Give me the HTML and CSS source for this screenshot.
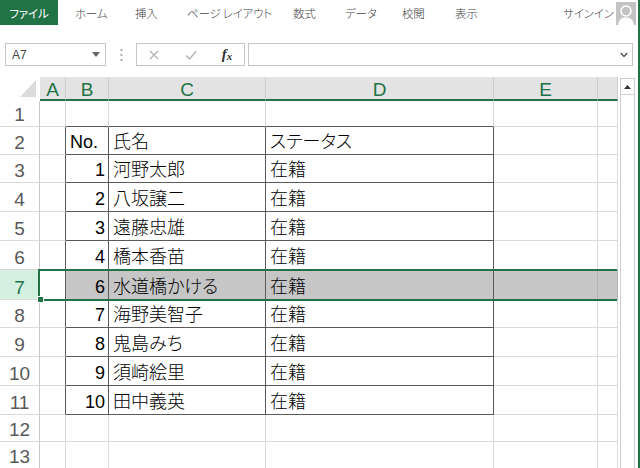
FILE: index.html
```html
<!DOCTYPE html>
<html lang="ja">
<head>
<meta charset="utf-8">
<title>Excel</title>
<link rel="stylesheet" href="styles.css">
</head>
<body>
<div class="app">
  <div class="tabs">
    <div class="tab"><div class="file">ファイル</div></div>
    <div class="tab">ホーム</div>
    <div class="tab">挿入</div>
    <div class="tab">ページ レイアウト</div>
    <div class="tab">数式</div>
    <div class="tab">データ</div>
    <div class="tab">校閲</div>
    <div class="tab">表示</div>
    <div class="tab">サインイン</div>
    <div class="avatar">
      <svg width="20" height="23" viewBox="0 0 20 23"><rect width="20" height="23" fill="#c3c3c3"/><circle cx="10" cy="9" r="5" fill="none" stroke="#fff" stroke-width="1.6"/><path d="M2 23 C3 17 6 15.5 10 15.5 C14 15.5 17 17 18 23 Z" fill="#fff"/></svg>
    </div>
  </div>

  <div class="fbar">
    <div class="namebox"><span>A7</span><svg width="8" height="5" viewBox="0 0 8 5"><path d="M0 0 H8 L4 5 Z" fill="#666"/></svg></div>
    <div class="colon"><svg width="3" height="12" viewBox="0 0 3 12"><rect x="0.5" y="0" width="2" height="2" fill="#aaa"/><rect x="0.5" y="5" width="2" height="2" fill="#aaa"/><rect x="0.5" y="10" width="2" height="2" fill="#aaa"/></svg></div>
    <div class="fbtns">
      <span class="fb"><svg width="10" height="10" viewBox="0 0 10 10"><path d="M1 1 L9 9 M9 1 L1 9" stroke="#b4b4b4" stroke-width="1.3"/></svg></span>
      <span class="fb"><svg width="12" height="10" viewBox="0 0 12 10"><path d="M1 5.5 L4.5 9 L11 1.5" fill="none" stroke="#b4b4b4" stroke-width="1.4"/></svg></span>
      <span class="fb fx"><i>f</i><span class="x">x</span></span>
    </div>
    <div class="finput"><svg width="8" height="6" viewBox="0 0 8 6"><path d="M0.8 1 L4 4.5 L7.2 1" fill="none" stroke="#555" stroke-width="1.4"/></svg></div>
  </div>

  <div class="main">
    <div class="sheet">
      <div class="corner"><svg width="40" height="24" viewBox="0 0 40 24"><path d="M20 20 H36 V3 Z" fill="#dcdcdc"/></svg></div>
      <div class="ch">A</div><div class="ch">B</div><div class="ch">C</div><div class="ch">D</div><div class="ch">E</div><div class="ch"></div>

      <div class="c rh">1</div><div class="c"></div><div class="c tb"></div><div class="c tb"></div><div class="c tb"></div><div class="c"></div><div class="c"></div>

      <div class="c rh">2</div><div class="c tr"></div><div class="c tb tr">No.</div><div class="c tb tr">氏名</div><div class="c tb tr">ステータス</div><div class="c"></div><div class="c"></div>

      <div class="c rh">3</div><div class="c tr"></div><div class="c tb tr num">1</div><div class="c tb tr">河野太郎</div><div class="c tb tr">在籍</div><div class="c"></div><div class="c"></div>

      <div class="c rh">4</div><div class="c tr"></div><div class="c tb tr num">2</div><div class="c tb tr">八坂譲二</div><div class="c tb tr">在籍</div><div class="c"></div><div class="c"></div>

      <div class="c rh">5</div><div class="c tr"></div><div class="c tb tr num">3</div><div class="c tb tr">遠藤忠雄</div><div class="c tb tr">在籍</div><div class="c"></div><div class="c"></div>

      <div class="c rh">6</div><div class="c tr"></div><div class="c tb tr num">4</div><div class="c tb tr">橋本香苗</div><div class="c tb tr">在籍</div><div class="c"></div><div class="c"></div>

      <div class="c rh on">7</div><div class="c tr"></div><div class="c tb tr num s">6</div><div class="c tb tr s">水道橋かける</div><div class="c tb tr s">在籍</div><div class="c s"></div><div class="c s"></div>

      <div class="c rh">8</div><div class="c tr"></div><div class="c tb tr num">7</div><div class="c tb tr">海野美智子</div><div class="c tb tr">在籍</div><div class="c"></div><div class="c"></div>

      <div class="c rh">9</div><div class="c tr"></div><div class="c tb tr num">8</div><div class="c tb tr">鬼島みち</div><div class="c tb tr">在籍</div><div class="c"></div><div class="c"></div>

      <div class="c rh">10</div><div class="c tr"></div><div class="c tb tr num">9</div><div class="c tb tr">須崎絵里</div><div class="c tb tr">在籍</div><div class="c"></div><div class="c"></div>

      <div class="c rh">11</div><div class="c tr"></div><div class="c tb tr num">10</div><div class="c tb tr">田中義英</div><div class="c tb tr">在籍</div><div class="c"></div><div class="c"></div>

      <div class="c rh">12</div><div class="c"></div><div class="c"></div><div class="c"></div><div class="c"></div><div class="c"></div><div class="c"></div>

      <div class="c rh">13</div><div class="c"></div><div class="c"></div><div class="c"></div><div class="c"></div><div class="c"></div><div class="c"></div>

      <div class="sel"></div>
      <div class="handle"></div>
    </div>
    <div class="vscroll">
      <div class="up"><svg width="7" height="4" viewBox="0 0 7 4"><path d="M0 4 H7 L3.5 0 Z" fill="#333"/></svg></div>
    </div>
  </div>
</div>
</body>
</html>
```

FILE: styles.css
```css
* { box-sizing: border-box; }
html, body { margin: 0; padding: 0; }
body {
  width: 640px;
  height: 468px;
  overflow: hidden;
  background: #fff;
  font-family: "Liberation Sans", "Noto Sans CJK JP", sans-serif;
}
.app {
  width: 640px;
  height: 468px;
  border-right: 2px solid #217346;
  overflow: hidden;
}

/* ribbon tabs */
.tabs {
  display: grid;
  grid-template-columns: 75px 60px 52px 106px 52px 57px 53px 108px 53px 22px;
  height: 25px;
  font-family: "Noto Sans CJK JP", sans-serif;
  font-size: 11.5px;
  font-weight: 300;
  color: #444;
  font-feature-settings: "palt";
}
.tab {
  display: flex;
  align-items: center;
  white-space: nowrap;
  letter-spacing: -0.2px;
}
.file {
  width: 58px;
  height: 25px;
  background: #217346;
  color: #fff;
  display: flex;
  align-items: center;
  justify-content: center;
  font-weight: 400;
}
.avatar { padding-top: 2px; display: flex; }

/* formula bar */
.fbar {
  display: flex;
  margin-top: 18px;
  height: 23px;
  padding-left: 5px;
}
.namebox {
  width: 101px;
  border: 1px solid #c6c6c6;
  display: flex;
  align-items: center;
  justify-content: space-between;
  padding: 0 5px 0 6px;
  font-size: 12px;
  color: #444;
}
.colon {
  width: 30px;
  display: flex;
  align-items: center;
  justify-content: center;
}
.fbtns {
  width: 109px;
  border: 1px solid #c6c6c6;
  display: grid;
  grid-template-columns: 34px 40px 32px;
  align-items: center;
}
.fb { display: flex; justify-content: center; align-items: center; }
.fx {
  font-family: "Liberation Serif", serif;
  font-size: 15px;
  line-height: 15px;
  color: #333;
}
.fx i { font-style: italic; font-weight: bold; }
.fx .x { font-size: 11px; font-style: italic; font-weight: bold; margin-top: 4px; }
.finput {
  margin-left: 3px;
  width: 385px;
  border: 1px solid #c6c6c6;
  display: flex;
  justify-content: flex-end;
  align-items: center;
  padding-right: 4px;
}

/* sheet */
.main {
  display: flex;
  margin-top: 11px;
}
.sheet {
  position: relative;
  width: 618px;
  display: grid;
  grid-template-columns: 40px 26px 43px 157px 228px 104px 20px;
  grid-template-rows: 24px 26px 28px 28px 29px 29px 29px 30px 28px 29px 29px 29px 27px 27px;
}
.corner { background: #fff; }
.corner svg { display: block; }
.ch {
  background: #e3e3e3;
  border-right: 1px solid #cdcdcd;
  border-bottom: 2px solid #217346;
  color: #217346;
  font-size: 19px;
  line-height: 19px;
  display: flex;
  justify-content: center;
  align-items: flex-end;
}
.c {
  border-right: 1px solid #dadada;
  border-bottom: 1px solid #dadada;
  display: flex;
  align-items: flex-end;
  padding: 0 3px 2px 4px;
  font-size: 18px;
  line-height: 20px;
  font-weight: 300;
  color: #000;
  white-space: nowrap;
  overflow: hidden;
  font-feature-settings: "palt";
}
.num { justify-content: flex-end; }
.tb { border-bottom-color: #5a5a5a; }
.tr { border-right-color: #5a5a5a; }
.s { background: #c6c6c6; }
.s:not(.tr) { border-right-color: #b2b2b2; }
.rh {
  justify-content: center;
  color: #595959;
  font-size: 19px;
  padding: 0 0 1px 0;
  border-right-color: #c8c8c8;
}
.rh.on { background: #d3f0e0; color: #217346; }

.sel {
  position: absolute;
  left: 38px;
  top: 192px;
  width: 579px;
  height: 32px;
  border: 2px solid #217346;
  border-right: 0;
}
.handle {
  position: absolute;
  left: 38px;
  top: 220px;
  width: 5px;
  height: 5px;
  background: #217346;
  box-shadow: 0 0 0 1px #fff;
}

.vscroll {
  margin-left: 2px;
  margin-top: 1px;
  width: 15px;
  height: 420px;
  border: 1px solid #cfcfcf;
  border-bottom: 0;
}
.up {
  height: 16px;
  border-bottom: 1px solid #cfcfcf;
  display: flex;
  align-items: center;
  justify-content: center;
}
```
